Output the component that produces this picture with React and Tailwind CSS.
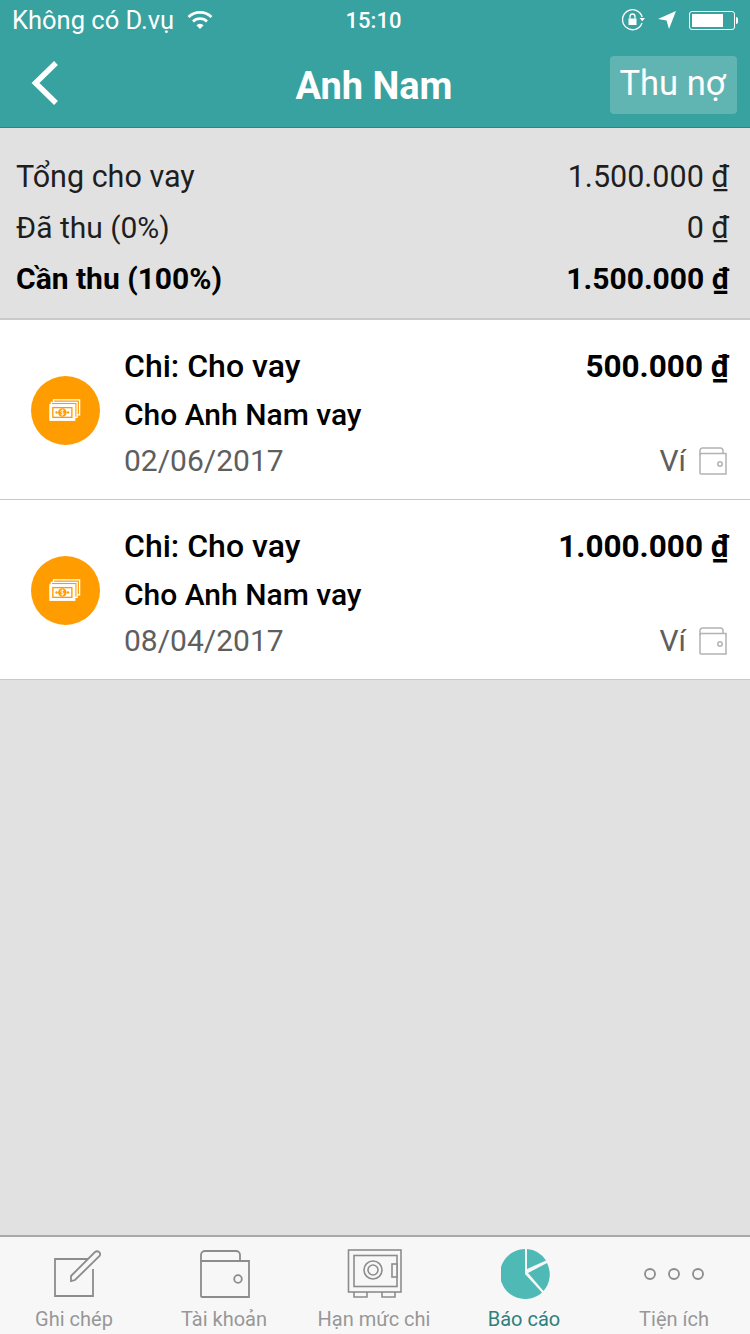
const transactions = [
  { amount: "500.000 ₫", date: "02/06/2017" },
  { amount: "1.000.000 ₫", date: "08/04/2017" },
];

function MoneyIcon() {
  return (
    <svg width="34" height="23" viewBox="0 0 36 26" fill="none" stroke="#fff" strokeWidth="1.5" className="-ml-[2px]">
      <path d="M5 3.5V1h29.5v17H32" />
      <path d="M2.5 6V3.8h29.2v17H29" />
      <rect x="1" y="6.5" width="28" height="17.5" fill="#fff" stroke="#fff" />
      <rect x="3.5" y="9" width="23" height="12.5" fill="#ff9c00" stroke="none" />
      <rect x="5" y="10.5" width="20" height="9.5" fill="#fff" stroke="none" />
      <circle cx="15" cy="15.2" r="4.8" fill="#ff9c00" stroke="none" />
      <circle cx="8.5" cy="15.2" r="1.4" fill="#ff9c00" stroke="none" />
      <circle cx="21.5" cy="15.2" r="1.4" fill="#ff9c00" stroke="none" />
      <path d="M16.8 13.2c-.8-.9-3.600-1-3.600.8s3.600 1 3.600 2.600-2.900 1.600-3.800.6M15 11.500v7.400" stroke="#fff" strokeWidth="0.9" />
    </svg>
  );
}

function SmallWallet() {
  return (
    <svg width="28" height="28" viewBox="0 0 28 28" fill="none" stroke="#b2b2b2" strokeWidth="1.5">
      <path d="M1 8V3.500A2.500 2.500 0 0 1 3.500 1h18A2.500 2.500 0 0 1 24 3.500V6.500" />
      <path d="M1 7.500C1 6.800 1.500 6.500 2 6.500h25v20.500H2a1 1 0 0 1-1-1z" />
      <circle cx="21" cy="17" r="2.200" />
    </svg>
  );
}

function Row({ amount, date }) {
  return (
    <div className="flex h-[180px] items-center border-b border-[#c8c8c8] bg-white pl-[31px] pr-[22px] pt-[2px]">
      <div className="flex h-[69px] w-[69px] shrink-0 items-center justify-center rounded-full bg-[#ff9c00]">
        <MoneyIcon />
      </div>
      <div className="ml-[25px] mt-[2px] flex-1">
        <div className="flex h-[49px] items-center justify-between text-[32px] font-medium text-black">
          <span className="-ml-[1px]">Chi: Cho vay</span>
          <span className="-mr-[1px] pt-[2px] text-[31.5px] font-bold">{amount}</span>
        </div>
        <div className="-ml-[1px] flex h-[49px] items-center text-[30px] font-medium text-black">Cho Anh Nam vay</div>
        <div className="flex h-[43px] items-center justify-between text-[30px] text-[#5e5e5e]">
          <span className="-ml-[1px]">{date}</span>
          <span className="flex items-center gap-[13px] pr-[1px]">
            Ví
            <SmallWallet />
          </span>
        </div>
      </div>
    </div>
  );
}

function Tab({ label, active, children }) {
  return (
    <div className="flex flex-1 flex-col items-center">
      <div className="flex h-[50px] items-center justify-center">{children}</div>
      <span className={`-ml-[2px] mt-[8px] text-[20px] leading-6 ${active ? "text-[#2f7f7c]" : "text-[#979797]"}`}>{label}</span>
    </div>
  );
}

export default function App() {
  return (
    <div className="flex h-[1334px] w-[750px] flex-col overflow-hidden bg-[#e1e1e1] font-['Roboto',sans-serif]">
      <header className="h-[128px] shrink-0 border-b border-[#2e8683] bg-[#37a29f] text-white">
        <div className="relative flex h-[40px] items-center justify-between pl-[12px] pr-[12px]">
          <div className="flex items-center gap-[13px]">
            <span className="text-[25.5px]">Không có D.vụ</span>
            <svg width="26" height="20" viewBox="0 0 26 20" fill="none" stroke="#fff" strokeWidth="2.600">
              <path d="M1.500 7a16.500 16.500 0 0 1 23 0" />
              <path d="M6 11.500a10 10 0 0 1 14 0" />
              <path d="M13 19l-3.600-3.800a5 5 0 0 1 7.200 0z" fill="#fff" stroke="none" />
            </svg>
          </div>
          <span className="absolute left-0 right-[3px] text-center text-[22px] font-medium">15:10</span>
          <div className="flex items-center gap-[12px]">
            <svg width="24" height="24" viewBox="0 0 24 24" fill="none" stroke="#fff" strokeWidth="1.300">
              <path d="M21 15a10 10 0 1 1 .2-6" />
              <path d="M18.500 10h5.500l-2.700 3.200z" fill="#fff" stroke="none" />
              <rect x="7.500" y="10.500" width="8" height="6.500" fill="#fff" stroke="none" />
              <path d="M9 10.500V8.500a2.500 2.500 0 0 1 5 0v2" />
            </svg>
            <svg width="20" height="20" viewBox="0 0 20 20"><path d="M19 1L1 9l8.500 1.500L12 19z" fill="#fff" /></svg>
            <div className="flex items-center">
              <div className="h-[19px] w-[46px] rounded-[3px] border border-white p-[2px]">
                <div className="h-full w-[31px] bg-white" />
              </div>
              <div className="ml-[1px] h-[7px] w-[2px] rounded-r-sm bg-white" />
            </div>
          </div>
        </div>
        <div className="relative flex h-[87px] items-center justify-between pl-[31px] pr-[13px]">
          <svg width="28" height="44" viewBox="0 0 28 44" fill="none" stroke="#fff" strokeWidth="5.500" className="-mt-[2px]">
            <path d="M25 2L4.500 22L25 42" />
          </svg>
          <span className="absolute left-0 right-[2px] top-[24px] text-center text-[38px] font-bold leading-[44px]">Anh Nam</span>
          <div className="mt-[3px] flex h-[58px] w-[127px] items-center justify-center rounded-[4px] bg-[#60b5b3] pb-[3px] pr-[2px] text-[34.5px] leading-none">
            Thu nợ
          </div>
        </div>
      </header>

      <section className="h-[192px] shrink-0 border-b-2 border-[#c9c9c9] pl-[16px] pt-[23px] pr-[21px] text-[30.5px] text-[#1e1e1e]">
        <div className="flex h-[51px] items-center justify-between">
          <span>Tổng cho vay</span>
          <span>1.500.000 ₫</span>
        </div>
        <div className="flex h-[51px] items-center justify-between">
          <span className="text-[30px]">Đã thu (0%)</span>
          <span>0 ₫</span>
        </div>
        <div className="flex h-[51px] items-center justify-between text-[30px] font-bold text-black">
          <span>Cần thu (100%)</span>
          <span>1.500.000 ₫</span>
        </div>
      </section>

      {transactions.map((t) => (
        <Row key={t.date} amount={t.amount} date={t.date} />
      ))}

      <div className="flex-1" />

      <nav className="flex h-[99px] shrink-0 border-t-2 border-[#a9a9a9] bg-[#f7f7f7] pt-[12px]">
        <Tab label="Ghi chép">
          <svg width="54" height="50" viewBox="0 0 54 50" fill="none" stroke="#8c8c8c" strokeWidth="1.800">
            <path d="M45 10H7v37h38V20" />
            <path d="M23 27L47 3q2-1.500 4 0t.5 4L27 31l-4 1z" fill="#f7f7f7" />
          </svg>
        </Tab>
        <Tab label="Tài khoản">
          <svg width="54" height="50" viewBox="0 0 54 50" fill="none" stroke="#8c8c8c" strokeWidth="1.800">
            <path d="M3 13V6a4 4 0 0 1 4-4h31a4 4 0 0 1 4 4v6" />
            <path d="M3 13a1 1 0 0 1 1-1h47v36H4a1 1 0 0 1-1-1z" />
            <circle cx="40" cy="30" r="3.800" />
          </svg>
        </Tab>
        <Tab label="Hạn mức chi">
          <svg width="56" height="50" viewBox="0 0 56 50" fill="none" stroke="#8c8c8c" strokeWidth="1.600">
            <rect x="1.500" y="1" width="52.500" height="42" />
            <rect x="7" y="6.500" width="43" height="31" />
            <circle cx="26" cy="21" r="9" />
            <circle cx="26" cy="21" r="5" />
            <rect x="45" y="15" width="5" height="13" fill="#f7f7f7" />
            <path d="M7 43v5h13v-5M35 43v5h13v-5" />
          </svg>
        </Tab>
        <Tab label="Báo cáo" active>
          <svg width="50" height="50" viewBox="0 0 50 50" fill="#4fbab5" className="ml-[2px]">
            <path d="M24 25V0a25 25 0 1 0 17 43.400z" />
            <path d="M26 0a25 25 0 0 1 19 11.500L26 20z" />
            <path d="M46 14a25 25 0 0 1-3.500 28L27 24z" />
          </svg>
        </Tab>
        <Tab label="Tiện ích">
          <svg width="62" height="14" viewBox="0 0 62 14" fill="none" stroke="#8c8c8c" strokeWidth="1.800">
            <circle cx="6" cy="7" r="5" />
            <circle cx="30" cy="7" r="5" />
            <circle cx="54" cy="7" r="5" />
          </svg>
        </Tab>
      </nav>
    </div>
  );
}
